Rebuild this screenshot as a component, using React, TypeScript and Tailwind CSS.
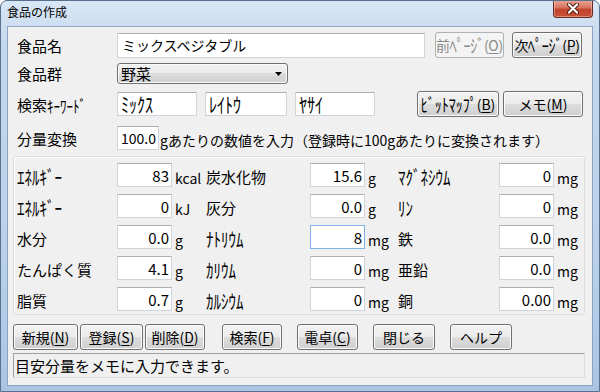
import React from "react";

const btnBase =
  "h-[26px] flex items-center justify-center rounded-[3px] border text-[14px] leading-none shrink-0 whitespace-nowrap";
const btnOn =
  "border-[#707070] bg-[linear-gradient(180deg,#f2f2f2_0%,#ebebeb_50%,#dddddd_50%,#cfcfcf_100%)] shadow-[inset_0_0_0_1px_#fbfbfb] text-black";
const btnOff = "border-[#adb2b5] bg-[#f4f4f4] text-[#8a8a8a]";

function Btn({
  children,
  cls,
  disabled,
}: {
  children: React.ReactNode;
  cls: string;
  disabled?: boolean;
}) {
  return <div className={`${btnBase} ${disabled ? btnOff : btnOn} ${cls}`}>{children}</div>;
}

function U({ c }: { c: string }) {
  return <span className="underline underline-offset-[2px]">{c}</span>;
}

function H({ children, cls = "" }: { children: React.ReactNode; cls?: string }) {
  return <span className={`inline-block scale-y-[1.3] origin-center ${cls}`}>{children}</span>;
}

const fieldCls =
  "bg-white border border-[#d0d4da] border-t-[#abadb3] flex items-center text-[14px] leading-none text-black";

type Cell = [string, string, string, boolean?, boolean?];
const rows: Cell[][] = [
  [["ｴﾈﾙｷﾞｰ", "83", "kcal", false, true], ["炭水化物", "15.6", "g"], ["ﾏｸﾞﾈｼｳﾑ", "0", "mg", false, true]],
  [["ｴﾈﾙｷﾞｰ", "0", "kJ", false, true], ["灰分", "0.0", "g"], ["ﾘﾝ", "0", "mg", false, true]],
  [["水分", "0.0", "g"], ["ﾅﾄﾘｳﾑ", "8", "mg", true, true], ["鉄", "0.0", "mg"]],
  [["たんぱく質", "4.1", "g"], ["ｶﾘｳﾑ", "0", "mg", false, true], ["亜鉛", "0.0", "mg"]],
  [["脂質", "0.7", "g"], ["ｶﾙｼｳﾑ", "0", "mg", false, true], ["銅", "0.00", "mg"]],
];

export default function App() {
  return (
    <div className="w-[600px] h-[392px] font-['Noto_Sans_CJK_JP',sans-serif] text-black rounded-t-[7px] border border-[#56708e] bg-[linear-gradient(180deg,#d9e7f5_0%,#c3d7ed_12%,#bcd2ea_60%,#aac5e3_100%)] flex flex-col overflow-hidden">
      {/* title bar */}
      <div className="h-[25px] flex items-start shrink-0">
        <span className="ml-[6px] mt-[5px] text-[12px] leading-none">食品の作成</span>
        <div className="ml-auto mr-[6px] -mt-[1px] w-[40px] h-[18px] rounded-b-[4px] border border-[#6b2a20] border-t-0 bg-[linear-gradient(180deg,#e9a896_0%,#d8745f_45%,#c4452f_55%,#c84f36_100%)] shadow-[inset_0_0_0_1px_rgba(255,255,255,0.35)] flex items-center justify-center">
          <svg width="12" height="11" viewBox="0 0 12 11">
            <path d="M2 1.5 L10 9.5 M10 1.5 L2 9.5" stroke="#4a1a12" strokeWidth="4" strokeLinecap="round" />
            <path d="M2 1.5 L10 9.5 M10 1.5 L2 9.5" stroke="#ffffff" strokeWidth="2.2" strokeLinecap="round" />
          </svg>
        </div>
      </div>

      {/* client area */}
      <div className="mx-[6px] h-[360px] border border-[#8ea5be] bg-[#f0f0f0] flex flex-col pl-[5px] shrink-0">
        {/* Row 1 */}
        <div className="mt-[5px] h-[26px] flex items-center pl-[4px]">
          <div className="w-[100px] text-[15px] leading-none">食品名</div>
          <div className={`${fieldCls} w-[308px] h-[25px] pl-[4px]`}>ミックスベジタブル</div>
          <Btn cls="ml-[10px] w-[69px] tracking-[-0.3px]" disabled>
            前<H>ﾍﾟｰｼﾞ</H>(<U c="O" />)
          </Btn>
          <Btn cls="ml-[8px] w-[70px] tracking-[-0.3px]">
            次<H>ﾍﾟｰｼﾞ</H>(<U c="P" />)
          </Btn>
        </div>
        {/* Row 2 */}
        <div className="mt-[5px] h-[21px] flex items-center pl-[4px]">
          <div className="w-[100px] text-[15px] leading-none">食品群</div>
          <div className="w-[171px] h-[21px] rounded-[3px] border border-[#707070] bg-[linear-gradient(180deg,#f2f2f2_0%,#ebebeb_50%,#dddddd_50%,#cfcfcf_100%)] shadow-[inset_0_0_0_1px_#fbfbfb] flex items-center pl-[3px] pr-[5px] text-[15px] leading-none">
            <span>野菜</span>
            <svg className="ml-auto" width="7" height="4" viewBox="0 0 7 4">
              <path d="M0 0 H7 L3.5 4 Z" fill="#000" />
            </svg>
          </div>
        </div>
        {/* Row 3 */}
        <div className="mt-[7px] h-[26px] flex items-center pl-[4px]">
          <div className="w-[100px] text-[15px] leading-none">
            検索<H cls="text-[13px]">ｷｰﾜｰﾄﾞ</H>
          </div>
          <div className={`${fieldCls} w-[80px] h-[24px] pl-[3px]`}>
            <H cls="text-[16px]">ﾐｯｸｽ</H>
          </div>
          <div className={`${fieldCls} ml-[8px] w-[82px] h-[24px] pl-[3px]`}>
            <H cls="text-[16px]">ﾚｲﾄｳ</H>
          </div>
          <div className={`${fieldCls} ml-[8px] w-[80px] h-[24px] pl-[3px]`}>
            <H cls="text-[16px]">ﾔｻｲ</H>
          </div>
          <Btn cls="ml-[42px] w-[82px]">
            <H>ﾋﾞｯﾄﾏｯﾌﾟ</H>(<U c="B" />)
          </Btn>
          <Btn cls="ml-[4px] w-[80px]">
            メモ(<U c="M" />)
          </Btn>
        </div>
        {/* Row 4 */}
        <div className="mt-[9px] h-[24px] flex items-center pl-[4px]">
          <div className="w-[100px] text-[15px] leading-none">分量変換</div>
          <div className={`${fieldCls} w-[42px] h-[24px] justify-end pr-[2px]`}>100.0</div>
          <span className="ml-[1px] text-[14px] leading-none pt-[3px]">
            gあたりの数値を入力（登録時に100gあたりに変換されます）
          </span>
        </div>

        {/* group box */}
        <div className="mt-[6px] w-[572px] h-[159px] rounded-[3px] border border-[#d5dfe5] shadow-[inset_1px_1px_0_#ffffff] pl-[3px] pt-[6px]">
          <div className="grid grid-cols-[100px_55px_34px_104px_55px_33px_101px_55px_1fr] gap-y-[7px]">
            {rows.map((r, i) =>
              r.map(([label, val, unit, focus, hw], j) => (
                <React.Fragment key={`${i}-${j}`}>
                  <div className="h-[24px] flex items-center text-[15px] leading-none pt-[2px]">
                    {hw ? <H>{label}</H> : label}
                  </div>
                  <div
                    className={`h-[24px] bg-white border flex items-center justify-end pr-[2px] text-[15px] leading-none ${
                      focus ? "border-[#7eb4ea]" : "border-[#d0d4da] border-t-[#abadb3]"
                    }`}
                  >
                    {val}
                  </div>
                  <div className="h-[24px] flex items-center pl-[3px] pt-[5px] text-[14px] leading-none">{unit}</div>
                </React.Fragment>
              ))
            )}
          </div>
        </div>

        {/* bottom buttons */}
        <div className="mt-[9px] h-[26px] flex items-center">
          <Btn cls="w-[65px]">
            新規(<U c="N" />)
          </Btn>
          <Btn cls="ml-[2px] w-[63px]">
            登録(<U c="S" />)
          </Btn>
          <Btn cls="ml-[2px] w-[60px]">
            削除(<U c="D" />)
          </Btn>
          <Btn cls="ml-[17px] w-[60px]">
            検索(<U c="F" />)
          </Btn>
          <Btn cls="ml-[15px] w-[61px]">
            電卓(<U c="C" />)
          </Btn>
          <Btn cls="ml-[15px] w-[62px]">閉じる</Btn>
          <Btn cls="ml-[15px] w-[62px]">ヘルプ</Btn>
        </div>

        {/* status bar */}
        <div className="mt-[3px] w-[572px] h-[25px] border border-[#a0a0a0] border-r-[#dcdcdc] border-b-[#dcdcdc] flex items-center pl-[1px] text-[15px] leading-none">
          目安分量をメモに入力できます。
        </div>
      </div>
    </div>
  );
}
